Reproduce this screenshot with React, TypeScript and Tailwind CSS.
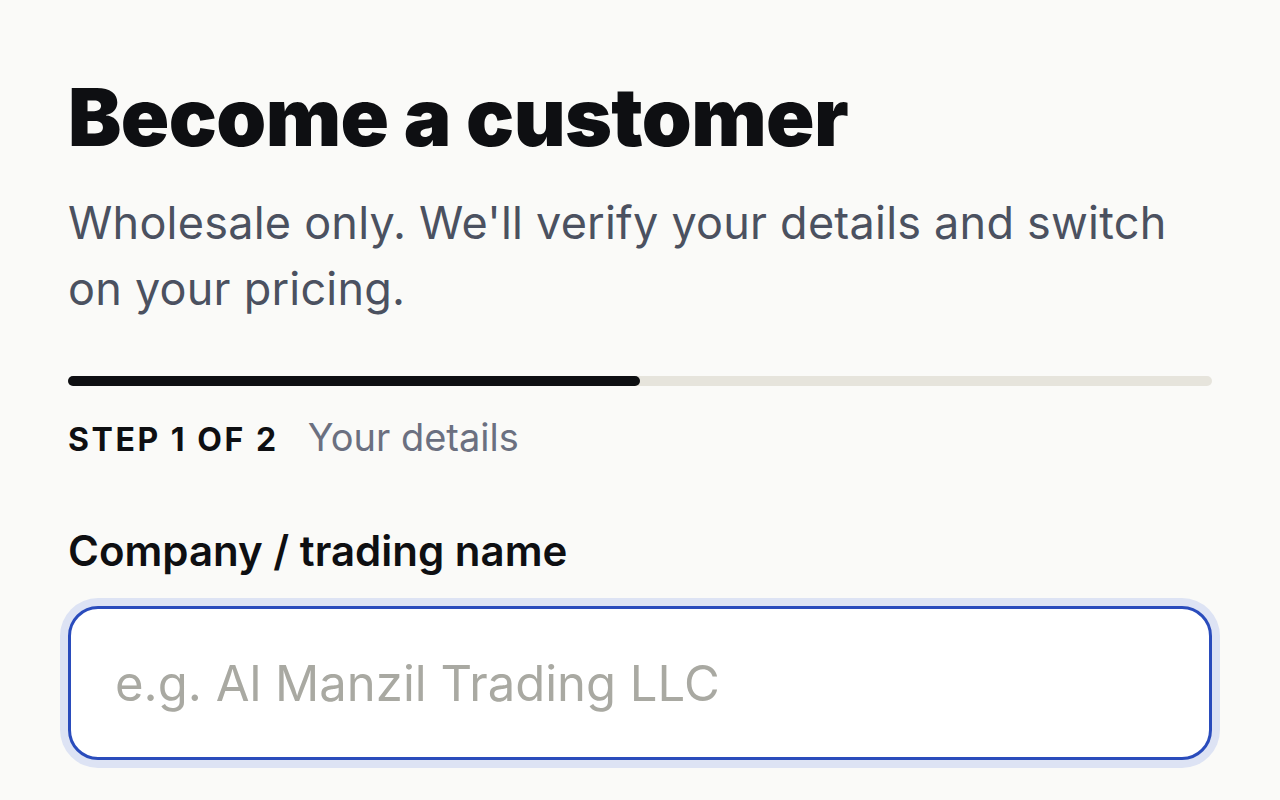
export default function App() {
  return (
    <div
      className="min-h-screen bg-[#fafaf8] px-[68px] pt-[77px]"
      style={{ fontFamily: "Inter, 'Noto Sans', sans-serif" }}
    >
      <h1 className="text-[80px] font-black leading-none tracking-[-0.008em] text-[#0e0f12]">
        Become a customer
      </h1>
      <p className="mt-[33px] text-[45px] leading-[66px] tracking-[0.005em] text-[#4b5160]">
        Wholesale only. We'll verify your details and switch on your pricing.
      </p>

      <div className="mt-[54px] h-[10px] w-full rounded-full bg-[#e6e4dc]">
        <div className="h-full w-1/2 rounded-full bg-[#0e0f12]" />
      </div>

      <div className="mt-[32px] flex items-baseline gap-[29px] leading-none">
        <span className="text-[32px] font-bold uppercase tracking-[0.08em] text-[#0e0f12]">
          Step 1 of 2
        </span>
        <span className="text-[38px] text-[#6b7080]">Your details</span>
      </div>

      <label className="mt-[74px] block text-[42px] font-semibold leading-none text-[#0e0f12]">
        Company / trading name
      </label>

      <div className="mt-[34px]">
        <input
          type="text"
          placeholder="e.g. Al Manzil Trading LLC"
          className="h-[154px] w-full rounded-[30px] border-[3px] border-[#2a4cbc] bg-white px-[44px] text-[49px] text-[#0e0f12] outline-none ring-[8px] ring-[#dde3f4] placeholder:text-[#a9a9a2]"
        />
      </div>
    </div>
  );
}
